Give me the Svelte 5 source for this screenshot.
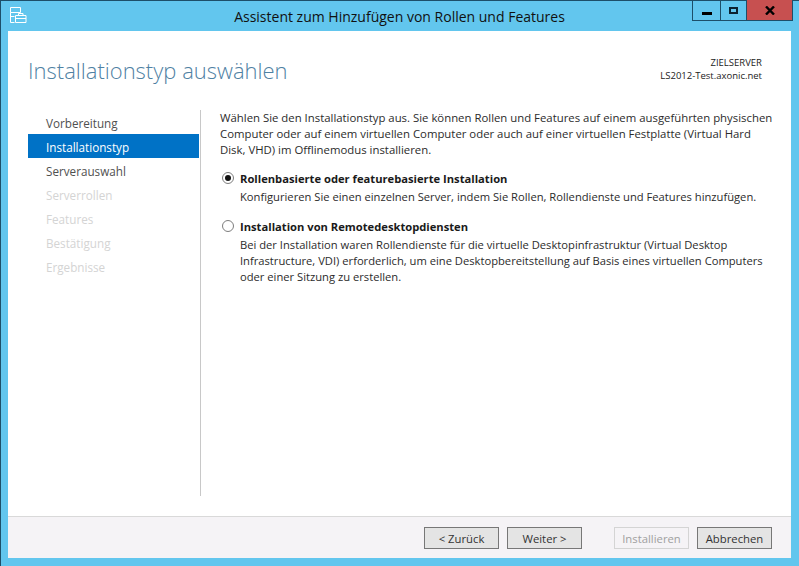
<script>
  const steps = [
    { label: "Vorbereitung", state: "done" },
    { label: "Installationstyp", state: "active" },
    { label: "Serverauswahl", state: "done" },
    { label: "Serverrollen", state: "off" },
    { label: "Features", state: "off" },
    { label: "Bestätigung", state: "off" },
    { label: "Ergebnisse", state: "off" }
  ];
  let installType = $state("role");
</script>

<div class="window">
  <header class="titlebar">
    <svg class="app-icon" width="17" height="17" viewBox="0 0 17 17" fill="none" stroke="#fff" stroke-width="1">
      <path d="M.5 .5h10v5h-10zM.5 5.5v10h4M.5 9.5h4" />
      <path d="M5.5 8.5h10.5v7h-10.5zM5.5 11.5h10.5M8.5 8.5v-2h4.5v2" />
    </svg>
    <span class="title">Assistent zum Hinzufügen von Rollen und Features</span>
    <div class="controls">
      <div class="ctl min"><span></span></div>
      <div class="ctl max"><span></span></div>
      <div class="ctl close">
        <svg width="10" height="9" viewBox="0 0 10 9" stroke="#000" stroke-width="2.4" fill="none"><path d="M1 .5l8 8M9 .5l-8 8" /></svg>
      </div>
    </div>
  </header>

  <div class="client">
    <div class="head">
      <h1>Installationstyp auswählen</h1>
      <div class="target">ZIELSERVER<br />LS2012-Test.axonic.net</div>
    </div>

    <div class="main">
      <nav>
        {#each steps as step}
          <div class="step {step.state}">{step.label}</div>
        {/each}
      </nav>
      <section>
        <p class="intro">
          Wählen Sie den Installationstyp aus. Sie können Rollen und Features auf einem ausgeführten physischen<br />
          Computer oder auf einem virtuellen Computer oder auch auf einer virtuellen Festplatte (Virtual Hard<br />
          Disk, VHD) im Offlinemodus installieren.
        </p>
        <label class="option first">
          <input type="radio" bind:group={installType} value="role" />
          <span class="radio"></span>
          <span class="name">Rollenbasierte oder featurebasierte Installation</span>
        </label>
        <p class="desc">Konfigurieren Sie einen einzelnen Server, indem Sie Rollen, Rollendienste und Features hinzufügen.</p>
        <label class="option second">
          <input type="radio" bind:group={installType} value="rds" />
          <span class="radio"></span>
          <span class="name">Installation von Remotedesktopdiensten</span>
        </label>
        <p class="desc">
          Bei der Installation waren Rollendienste für die virtuelle Desktopinfrastruktur (Virtual Desktop<br />
          Infrastructure, VDI) erforderlich, um eine Desktopbereitstellung auf Basis eines virtuellen Computers<br />
          oder einer Sitzung zu erstellen.
        </p>
      </section>
    </div>

    <footer>
      <button>&lt; Zurück</button>
      <button>Weiter &gt;</button>
      <button class="install" disabled>Installieren</button>
      <button>Abbrechen</button>
    </footer>
  </div>
</div>

<style>
  :global(body) {
    margin: 0;
    background: #62c6ee;
  }

  .window {
    width: 799px;
    height: 566px;
    box-sizing: border-box;
    display: flex;
    flex-direction: column;
    background: #62c6ee;
    border-top: 1px solid #1d4f69;
    border-left: 1px solid #1d4f69;
    padding: 0 8px 8px 7px;
    font-family: "Open Sans", "Liberation Sans", sans-serif;
    font-size: 11.36px;
    color: #2b2b2b;
  }

  .titlebar {
    height: 30px;
    flex: none;
    position: relative;
    display: flex;
    align-items: center;
    justify-content: center;
  }

  .app-icon {
    position: absolute;
    left: 2px;
    top: 6px;
  }

  .title {
    font-size: 14px;
    color: #111;
  }

  .controls {
    position: absolute;
    top: -1px;
    right: -2px;
    display: flex;
    height: 21px;
    border: 1px solid #1d4f69;
    border-top: none;
    box-sizing: border-box;
  }

  .ctl {
    display: flex;
    align-items: center;
    justify-content: center;
    height: 100%;
  }

  .min {
    width: 27px;
    border-right: 1px solid #1d4f69;
  }

  .min span {
    width: 10px;
    height: 3px;
    background: #000;
    margin-top: 7px;
  }

  .max {
    width: 25px;
  }

  .max span {
    width: 5px;
    height: 3px;
    border: 2px solid #0b2230;
  }

  .close {
    width: 45px;
    background: #c75050;
    border-left: 1px solid #1d4f69;
  }

  .client {
    flex: 1;
    display: flex;
    flex-direction: column;
    background: #fff;
    min-height: 0;
  }

  .head {
    display: flex;
    justify-content: space-between;
    padding: 24px 29px 0 20px;
    height: 79px;
    box-sizing: border-box;
    flex: none;
  }

  h1 {
    margin: 0;
    font-size: 22px;
    font-weight: 300;
    line-height: 30px;
    color: #4f81a3;
  }

  .target {
    font-size: 9.5px;
    line-height: 13px;
    text-align: right;
    color: #222;
    padding-top: 1px;
  }

  .main {
    flex: 1;
    display: flex;
    min-height: 0;
    padding-left: 20px;
    margin-bottom: 20px;
  }

  nav {
    width: 172px;
    flex: none;
    border-right: 1px solid #c8c8c8;
  }

  .step {
    height: 24px;
    line-height: 26px;
    padding-left: 18px;
    font-size: 11.7px;
    width: 171px;
    box-sizing: border-box;
    overflow: hidden;
  }

  .step.done {
    color: #505050;
  }

  .step.active {
    background: #0072c6;
    color: #fff;
  }

  .step.off {
    color: #d4d4d4;
  }

  section {
    padding: 0 0 0 19px;
    flex: 1;
    min-width: 0;
  }

  p {
    margin: 0;
    line-height: 16px;
    white-space: nowrap;
  }

  .option {
    display: flex;
    align-items: center;
    height: 16px;
    font-size: 11.2px;
    font-weight: 700;
    color: #1a1a1a;
  }

  .option.first {
    margin-top: 12px;
  }

  .option.second {
    margin-top: 13px;
  }

  .option input {
    display: none;
  }

  .radio {
    width: 10px;
    height: 10px;
    border: 1px solid #7d7d7d;
    border-radius: 50%;
    margin: 0 6px 0 2px;
    flex: none;
    display: flex;
    align-items: center;
    justify-content: center;
  }

  .option input:checked + .radio::after {
    content: "";
    width: 6px;
    height: 6px;
    border-radius: 50%;
    background: #111;
  }

  .desc {
    margin: 3px 0 0 20px;
    font-size: 11.2px;
  }

  footer {
    flex: none;
    height: 42px;
    box-sizing: border-box;
    border-top: 1px solid #d9d9d9;
    background: #f5f3f6;
    display: flex;
    align-items: flex-start;
    padding: 10px 19px 0 0;
    justify-content: flex-end;
    gap: 8px;
  }

  button {
    width: 75px;
    height: 22px;
    padding: 0;
    box-sizing: border-box;
    border: 1px solid #777;
    background: #e4e4e4;
    font-family: inherit;
    font-size: 11.3px;
    color: #333;
  }

  button.install {
    margin-left: 24px;
    background: #f5f3f6;
    border-color: #d4d4d4;
    color: #a0a0a0;
  }
</style>
